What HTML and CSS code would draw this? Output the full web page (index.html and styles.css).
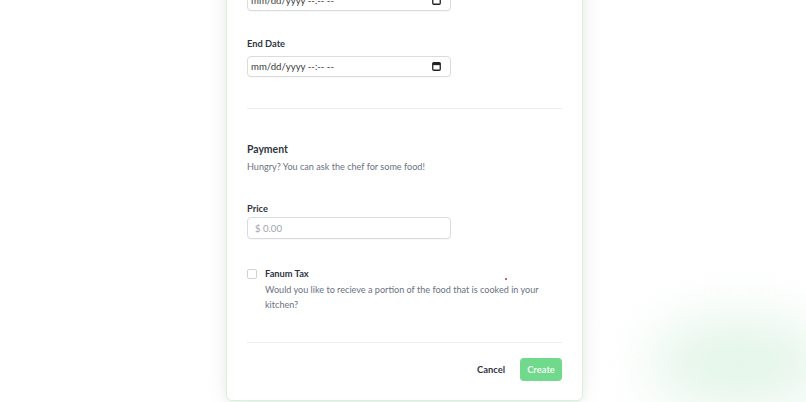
FILE: index.html
```html
<!DOCTYPE html>
<html>
<head>
<meta charset="utf-8">
<link rel="stylesheet" href="styles.css">
</head>
<body>
<div class="blob"></div>
<main class="page">
  <section class="card">
    <div class="field first">
      <label class="label">Start Date</label>
      <div class="input date">
        <span>mm/dd/yyyy --:-- --</span>
        <svg class="cal" viewBox="0 0 9 9" width="9" height="9"><rect x="0.75" y="0.75" width="7.5" height="7.5" rx="1" fill="none" stroke="#222" stroke-width="1.3"/><rect x="0.75" y="0.75" width="7.5" height="2.4" fill="#222"/></svg>
      </div>
    </div>
    <div class="field">
      <label class="label">End Date</label>
      <div class="input date">
        <span>mm/dd/yyyy --:-- --</span>
        <svg class="cal" viewBox="0 0 9 9" width="9" height="9"><rect x="0.75" y="0.75" width="7.5" height="7.5" rx="1" fill="none" stroke="#222" stroke-width="1.3"/><rect x="0.75" y="0.75" width="7.5" height="2.4" fill="#222"/></svg>
      </div>
    </div>
    <hr class="divider top-divider">
    <h2 class="heading">Payment</h2>
    <p class="sub">Hungry? You can ask the chef for some food!</p>
    <div class="field price-field">
      <label class="label">Price</label>
      <div class="input price"><span>$ 0.00</span></div>
    </div>
    <div class="check-row">
      <span class="checkbox"></span>
      <div class="check-text">
        <div class="check-title">Fanum Tax</div>
        <p class="check-desc">Would you like to recieve a portion of the food that is cooked in your kitchen?</p>
      </div>
    </div>
    <hr class="divider bottom-divider">
    <div class="actions">
      <button class="btn cancel">Cancel</button>
      <button class="btn create">Create</button>
    </div>
  </section>
</main>
<span class="dot"></span>
</body>
</html>
```
FILE: styles.css
```css
* { box-sizing: border-box; }
html, body { margin: 0; padding: 0; }
body {
  width: 806px;
  height: 402px;
  overflow: hidden;
  background: #ffffff;
  font-family: Lato, "Noto Sans", sans-serif;
  color: #374151;
  position: relative;
}
.blob {
  position: absolute;
  left: 650px;
  top: 318px;
  width: 180px;
  height: 90px;
  border-radius: 50%;
  background: rgba(200, 235, 210, 0.5);
  filter: blur(28px);
}
.page {
  position: relative;
  display: flex;
  justify-content: center;
  padding-left: 3px;
}
.card {
  width: 357px;
  margin-top: -50px;
  background: #fff;
  border: 1px solid #d3f3dc;
  border-radius: 6px;
  box-shadow: 0 0 22px rgba(0, 0, 0, 0.07), 0 4px 10px rgba(0,0,0,0.04);
  padding: 20px 20px 19px 20px;
}
.field { display: flex; flex-direction: column; }
.field + .field { margin-top: 26px; }
.label {
  font-size: 9.3px;
  font-weight: 700;
  line-height: 14px;
  color: #2f3542;
  margin-bottom: 5px;
}
.input {
  width: 204px;
  height: 21px;
  border: 1px solid #d8dbe0;
  border-radius: 4px;
  background: #fff;
  display: flex;
  align-items: center;
  padding: 0 9px 0 3px;
  font-size: 9.6px;
  box-shadow: 0 1px 1px rgba(0,0,0,0.03);
}
.date { justify-content: space-between; color: #3b3b3b; }
.cal { display: block; }
.price { height: 22px; padding-left: 7px; color: #a0a5ad; }
.divider {
  border: 0;
  border-top: 1px solid #eceef1;
  margin: 0;
}
.top-divider { margin-top: 31px; }
.heading {
  margin: 32px 0 0;
  font-size: 10.4px;
  line-height: 16px;
  font-weight: 700;
  color: #2f3542;
}
.sub {
  margin: 3px 0 0;
  font-size: 9.1px;
  line-height: 14px;
  color: #6b7280;
}
.price-field { margin-top: 28px; }
.price-field .label { margin-bottom: 1px; }
.check-row {
  display: flex;
  align-items: flex-start;
  gap: 8px;
  margin-top: 28px;
}
.checkbox {
  width: 10px;
  height: 10px;
  margin-top: 2px;
  border: 1px solid #cfd3d9;
  border-radius: 2px;
  flex: none;
}
.check-title {
  font-size: 9.3px;
  line-height: 14px;
  font-weight: 700;
  color: #2f3542;
}
.check-desc {
  margin: 1px 0 0;
  font-size: 9.1px;
  line-height: 15px;
  color: #6b7280;
  max-width: 290px;
}
.bottom-divider { margin-top: 30px; }
.actions {
  display: flex;
  justify-content: flex-end;
  align-items: center;
  gap: 15px;
  margin-top: 15px;
}
.btn {
  font-family: inherit;
  font-size: 9.4px;
  font-weight: 700;
  border: 0;
  background: none;
  height: 23px;
  border-radius: 4px;
  padding: 0;
  cursor: pointer;
}
.cancel { color: #2f3542; }
.create {
  background: #70d98c;
  color: rgba(255,255,255,0.9);
  width: 42px;
}
.dot {
  position: absolute;
  left: 505px;
  top: 278px;
  width: 2px;
  height: 2px;
  border-radius: 50%;
  background: #e11d48;
}
```
